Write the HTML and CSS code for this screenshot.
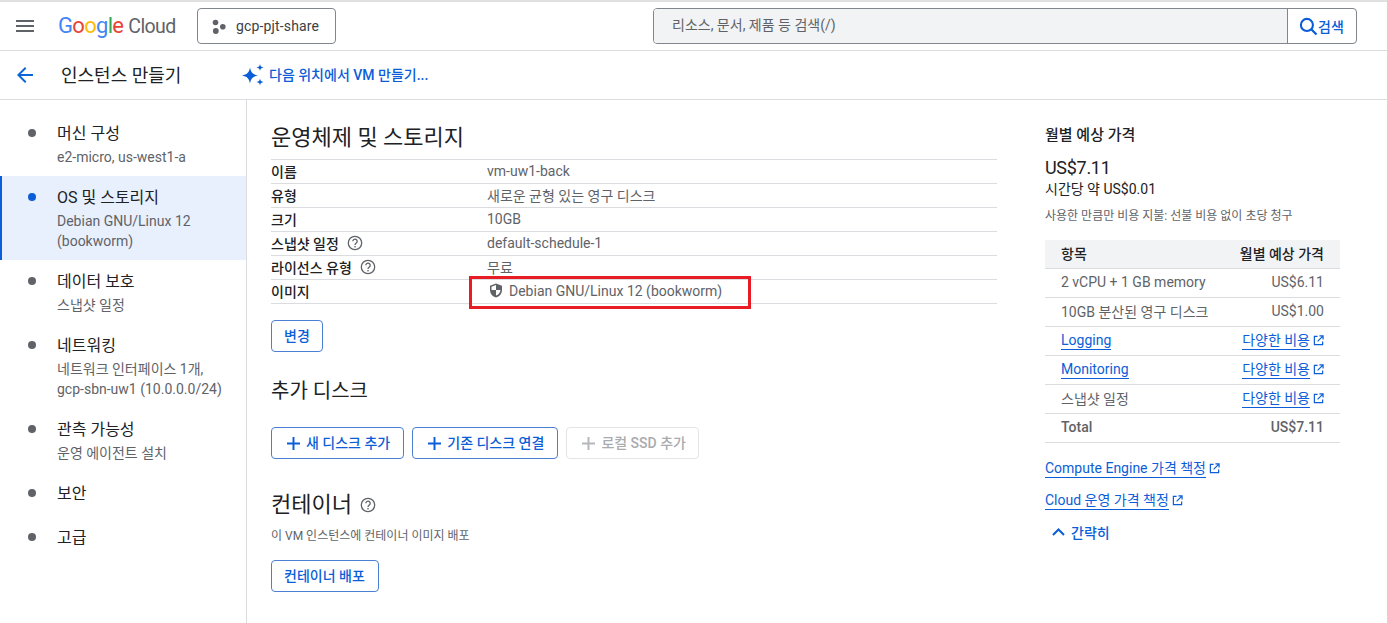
FILE: index.html
```html
<!DOCTYPE html>
<html lang="ko">
<head>
<meta charset="utf-8">
<title>인스턴스 만들기</title>
<link rel="stylesheet" href="styles.css">
</head>
<body>
<header class="topbar">
  <svg class="menu-icon" viewBox="0 0 18 12" width="18" height="12"><path d="M0 0h18v2H0zM0 5h18v2H0zM0 10h18v2H0z" fill="#5f6368"/></svg>
  <div class="logo"><span class="logo-g"><span class="c-b">G</span><span class="c-r">o</span><span class="c-y">o</span><span class="c-b">g</span><span class="c-g">l</span><span class="c-r">e</span></span><span class="logo-c">Cloud</span></div>
  <button class="project"><svg viewBox="0 0 14 15" width="14" height="15"><circle cx="3.500" cy="3.500" r="2.800" fill="#5f6368"/><circle cx="10.800" cy="7.800" r="2.800" fill="#5f6368"/><circle cx="3.800" cy="12" r="2.900" fill="#5f6368"/></svg><span>gcp-pjt-share</span></button>
  <div class="search">
    <div class="search-input">리소스, 문서, 제품 등 검색(/)</div>
    <div class="search-btn"><svg viewBox="0 0 18 18" width="19" height="19"><circle cx="7.500" cy="7.500" r="5.700" fill="none" stroke="#0b5ed7" stroke-width="2"/><path d="M11.600 11.600l5 5" stroke="#0b5ed7" stroke-width="2.200"/></svg><span>검색</span></div>
  </div>
</header>
<div class="subbar">
  <svg class="back" viewBox="0 0 16 16" width="16" height="16"><path d="M16 7H3.800l5.600-5.600L8 0 0 8l8 8 1.400-1.400L3.800 9H16z" fill="#0b67d8"/></svg>
  <h1>인스턴스 만들기</h1>
  <a class="gemini"><svg viewBox="0 0 22 22" width="22" height="22"><path d="M8 3.500c.9 5 3 7.100 8 8-5 .9-7.100 3-8 8-.9-5-3-7.100-8-8 5-.9 7.100-3 8-8z" fill="#0b5ed7"/><path d="M18 0c.4 2.300 1.200 3.100 3.500 3.500-2.300.4-3.100 1.200-3.500 3.500-.4-2.300-1.200-3.100-3.500-3.500C16.800 3.100 17.600 2.300 18 0zM18 14.500c.4 2.300 1.200 3.100 3.500 3.500-2.300.4-3.100 1.200-3.500 3.500-.4-2.300-1.200-3.100-3.500-3.500 2.300-.4 3.100-1.200 3.500-3.500z" fill="#0b5ed7"/></svg><span>다음 위치에서 VM 만들기...</span></a>
</div>
<div class="layout">
  <nav class="sidebar">
    <div class="step"><i></i><div><div class="step-title">머신 구성</div><div class="step-sub">e2-micro, us-west1-a</div></div></div>
    <div class="step active"><i></i><div><div class="step-title">OS 및 스토리지</div><div class="step-sub">Debian GNU/Linux 12<br>(bookworm)</div></div></div>
    <div class="step"><i></i><div><div class="step-title">데이터 보호</div><div class="step-sub">스냅샷 일정</div></div></div>
    <div class="step"><i></i><div><div class="step-title">네트워킹</div><div class="step-sub">네트워크 인터페이스 1개,<br>gcp-sbn-uw1 (10.0.0.0/24)</div></div></div>
    <div class="step"><i></i><div><div class="step-title">관측 가능성</div><div class="step-sub">운영 에이전트 설치</div></div></div>
    <div class="step"><i></i><div><div class="step-title">보안</div></div></div>
    <div class="step"><i></i><div><div class="step-title">고급</div></div></div>
  </nav>
  <main class="content">
    <h2 class="os-title">운영체제 및 스토리지</h2>
    <div class="spec">
      <div class="row"><b>이름</b><span>vm-uw1-back</span></div>
      <div class="row"><b>유형</b><span>새로운 균형 있는 영구 디스크</span></div>
      <div class="row"><b>크기</b><span>10GB</span></div>
      <div class="row"><b>스냅샷 일정 <svg class="help" viewBox="0 0 16 16" width="16" height="16"><use href="#help"/></svg></b><span>default-schedule-1</span></div>
      <div class="row"><b>라이선스 유형 <svg class="help" viewBox="0 0 16 16" width="16" height="16"><use href="#help"/></svg></b><span>무료</span></div>
      <div class="row image-row"><b>이미지</b><span><svg viewBox="0 0 14 15" width="14" height="15"><path d="M7 .5l6 2.300v4.200c0 3.600-2.500 6.500-6 7.500-3.500-1-6-3.900-6-7.500V2.800z" fill="#5f6368"/><path d="M7 2v5h4.500c-.2 2.600-2 4.700-4.500 5.500V7H2.500V3.800z" fill="#fff"/></svg>Debian GNU/Linux 12 (bookworm)</span><div class="highlight"></div></div>
    </div>
    <button class="btn change">변경</button>
    <h2 class="disk-title">추가 디스크</h2>
    <div class="btn-row">
      <button class="btn"><svg viewBox="0 0 12 12" width="13" height="13"><path d="M5.100 0h1.800v5.100H12v1.800H6.900V12H5.100V6.900H0V5.100h5.100z" fill="#0b5ed7"/></svg>새 디스크 추가</button>
      <button class="btn"><svg viewBox="0 0 12 12" width="13" height="13"><path d="M5.100 0h1.800v5.100H12v1.800H6.900V12H5.100V6.900H0V5.100h5.100z" fill="#0b5ed7"/></svg>기존 디스크 연결</button>
      <button class="btn disabled"><svg viewBox="0 0 12 12" width="13" height="13"><path d="M5.100 0h1.800v5.100H12v1.800H6.900V12H5.100V6.900H0V5.100h5.100z" fill="#b5b7ba"/></svg>로컬 SSD 추가</button>
    </div>
    <h2 class="cont-title">컨테이너 <svg class="help" viewBox="0 0 16 16" width="16" height="16"><use href="#help"/></svg></h2>
    <p class="cont-desc">이 VM 인스턴스에 컨테이너 이미지 배포</p>
    <button class="btn deploy">컨테이너 배포</button>
  </main>
  <aside class="price">
    <h3>월별 예상 가격</h3>
    <div class="total">US$7.11</div>
    <div class="hourly">시간당 약 US$0.01</div>
    <div class="note">사용한 만큼만 비용 지불: 선불 비용 없이 초당 청구</div>
    <div class="ptable">
      <div class="prow phead"><span>항목</span><span>월별 예상 가격</span></div>
      <div class="prow"><span>2 vCPU + 1 GB memory</span><span>US$6.11</span></div>
      <div class="prow"><span>10GB 분산된 영구 디스크</span><span>US$1.00</span></div>
      <div class="prow"><a>Logging</a><span class="ext-wrap"><a>다양한 비용</a><svg class="ext" viewBox="0 0 12 12" width="11" height="11"><use href="#ext"/></svg></span></div>
      <div class="prow"><a>Monitoring</a><span class="ext-wrap"><a>다양한 비용</a><svg class="ext" viewBox="0 0 12 12" width="11" height="11"><use href="#ext"/></svg></span></div>
      <div class="prow"><span>스냅샷 일정</span><span class="ext-wrap"><a>다양한 비용</a><svg class="ext" viewBox="0 0 12 12" width="11" height="11"><use href="#ext"/></svg></span></div>
      <div class="prow ptotal"><span>Total</span><span>US$7.11</span></div>
    </div>
    <div class="plink first"><a>Compute Engine 가격 책정</a><svg class="ext" viewBox="0 0 12 12" width="11" height="11"><use href="#ext"/></svg></div>
    <div class="plink"><a>Cloud 운영 가격 책정</a><svg class="ext" viewBox="0 0 12 12" width="11" height="11"><use href="#ext"/></svg></div>
    <div class="collapse"><svg viewBox="0 0 13 8" width="13" height="8"><path d="M1 7l5.500-5.500L12 7" fill="none" stroke="#0b5ed7" stroke-width="2"/></svg><span>간략히</span></div>
  </aside>
</div>
<svg class="defs" width="0" height="0">
  <symbol id="help" viewBox="0 0 16 16"><circle cx="8" cy="8" r="6.700" fill="none" stroke="#5f6368" stroke-width="1.300"/><path d="M5.800 6.300a2.200 2.200 0 1 1 3.500 1.800c-.8.600-1.300 1-1.300 2" fill="none" stroke="#5f6368" stroke-width="1.300"/><rect x="7.300" y="11" width="1.400" height="1.400" fill="#5f6368"/></symbol>
  <symbol id="ext" viewBox="0 0 12 12"><path d="M5 1.500H1.500v9h9V7" fill="none" stroke="#0b5ed7" stroke-width="1.300"/><path d="M7 1h4v4M11 1L5 7" fill="none" stroke="#0b5ed7" stroke-width="1.300"/></symbol>
</svg>
</body>
</html>
```

FILE: styles.css
```css
* { box-sizing: border-box; }
html, body { margin: 0; height: 623px; overflow: hidden; }
body { font-family: Roboto, "Noto Sans CJK KR", sans-serif; font-size: 14px; color: #202124; background: #fff; }
h1, h2, h3, p { margin: 0; font-weight: 400; }
a { color: #0b5ed7; }
button { font-family: inherit; background: #fff; cursor: pointer; }
.defs { position: absolute; }

.topbar { height: 51px; border-top: 2px solid #e0e0e0; border-bottom: 1px solid #dadce0; display: flex; align-items: center; padding-left: 16px; }
.menu-icon { flex: none; }
.logo { margin-left: 24px; width: 116px; display: flex; align-items: baseline; white-space: nowrap; margin-bottom: 2px; }
.logo-g { font-size: 22px; font-weight: 400; letter-spacing: -0.7px; }
.logo-c { margin-left: 5px; font-size: 19.500px; color: #5f6368; letter-spacing: -0.6px; }
.c-b { color: #4285f4; } .c-r { color: #ea4335; } .c-y { color: #fbbc04; } .c-g { color: #34a853; }
.project { margin-left: 23px; width: 139px; height: 36px; border: 1px solid #80868b; border-radius: 4px; display: flex; align-items: center; gap: 10px; padding: 0 0 0 14px; font-size: 14px; letter-spacing: 0.15px; color: #3c4043; }
.search { margin-left: 317px; width: 704px; height: 36px; display: flex; border: 1px solid #80868b; border-radius: 4px; overflow: hidden; }
.search-input { flex: 1; background: #f1f3f4; padding-left: 18px; line-height: 33px; color: #5f6368; font-size: 14px; }
.search-btn { width: 69px; border-left: 1px solid #80868b; display: flex; align-items: center; padding-left: 11px; color: #0b5ed7; font-size: 14px; font-weight: 500; }

.subbar { height: 49px; border-bottom: 1px solid #dadce0; display: flex; align-items: center; padding-left: 17px; }
.back { flex: none; }
.subbar h1 { margin-left: 28px; margin-bottom: 3px; font-size: 18px; width: 181px; }
.gemini { display: flex; align-items: center; gap: 5px; font-size: 14px; font-weight: 500; color: #0b5ed7; }
.gemini span { margin-bottom: 2px; }

.layout { display: flex; height: 523px; }
.sidebar { width: 247px; flex: none; border-right: 1px solid #dadce0; padding-top: 12px; }
.step { display: flex; padding: 10px 0 9px 27px; border-left: 2px solid transparent; margin-left: -1px; }
.step i { width: 8px; height: 8px; margin-top: 7px; border-radius: 50%; background: #5f6368; flex: none; margin-right: 21px; }
.step-title { font-size: 16px; line-height: 24px; margin-bottom: 1px; color: #202124; }
.step-sub { font-size: 14px; line-height: 20px; color: #5f6368; white-space: nowrap; }
.step.active { background: #e8f0fe; border-left-color: #0b5ed7; margin-left: 0; padding-left: 26px; }
.step.active i { background: #0b5ed7; }

.content { width: 726px; margin-left: 24px; flex: none; }
.os-title { font-size: 22px; line-height: 32px; margin-top: 22px; margin-bottom: 5px; }
.spec { border-top: 1px solid #dadce0; }
.row { height: 24px; display: flex; align-items: center; border-bottom: 1px solid #dadce0; position: relative; font-size: 14px; padding-bottom: 2px; }
.row b { width: 216px; font-weight: 500; color: #202124; display: flex; align-items: center; gap: 8px; }
.row > span { color: #5f6368; display: flex; align-items: center; }
.image-row > span { margin-left: 2px; gap: 6px; }
.help { flex: none; }
.highlight { position: absolute; left: 198px; top: -4px; width: 282px; height: 33px; border: 3px solid #e81c24; }
.btn { height: 32px; padding: 0 12px 2px; border: 1px solid #4a7fd4; border-radius: 4px; color: #0b5ed7; font-size: 14px; font-weight: 500; display: inline-flex; align-items: center; gap: 6px; }
.btn svg { margin-top: 2px; }
.change { margin-top: 16px; }
.disk-title { font-size: 20px; line-height: 28px; margin-top: 25px; }
.btn-row { display: flex; gap: 8px; margin-top: 22px; }
.btn-row .btn { padding: 0 13px 2px 15px; }
.btn-row .btn.disabled { color: #a9abae; border-color: #e3e4e6; padding-right: 12px; }
.deploy { padding: 0 13px 2px 12px; }
.cont-title { font-size: 22px; line-height: 28px; margin-top: 32px; display: flex; align-items: center; gap: 8px; }
.cont-desc { font-size: 12px; line-height: 16px; color: #5f6368; margin-top: 9px; margin-bottom: 16px; }

.price { width: 295px; margin-left: 48px; flex: none; }
.price h3 { font-size: 15px; font-weight: 500; line-height: 22px; margin-top: 24px; }
.total { font-size: 18px; line-height: 24px; margin-top: 10px; letter-spacing: -0.3px; }
.hourly { font-size: 14px; line-height: 20px; margin-top: -1px; }
.note { font-size: 12px; line-height: 16px; color: #5f6368; margin-top: 9px; }
.ptable { margin-top: 16px; }
.prow { height: 29px; display: flex; justify-content: space-between; align-items: center; padding: 0 16px 2px; border-bottom: 1px solid #dadce0; color: #5f6368; font-size: 14px; }
.prow a { border-bottom: 1px solid #0b5ed7; line-height: 18px; }
.phead { background: #f1f3f4; color: #202124; font-weight: 500; }
.ptotal { font-weight: 500; }
.ext-wrap { display: flex; align-items: center; }
.ext { flex: none; margin-left: 3px; }
.plink { display: flex; align-items: center; font-size: 14px; margin-top: 13px; }
.plink a { border-bottom: 1px solid #0b5ed7; line-height: 18px; }
.plink.first { margin-top: 16px; }
.collapse { display: flex; align-items: center; gap: 6px; margin-top: 12px; padding-left: 7px; color: #0b5ed7; font-weight: 500; font-size: 14px; }
```
